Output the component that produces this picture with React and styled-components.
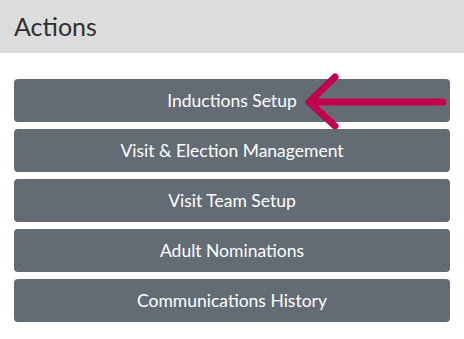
import React from 'react';
import styled, { createGlobalStyle } from 'styled-components';

const GlobalStyle = createGlobalStyle`
    html, body {
        margin: 0;
        padding: 0;
        background: #fff;
    }
    body {
        font-family: Lato, "Open Sans", sans-serif;
    }
`;

const Panel = styled.div`
    width: 464px;
    height: 339px;
    background: #fff;
`;

const Header = styled.div`
    height: 53px;
    background: #dcdcdc;
    display: flex;
    align-items: center;
    padding: 0 14px;

    h3 {
        margin: 0;
        font-size: 25px;
        font-weight: 400;
        color: #2f2f2f;
        line-height: 1;
    }
`;

const Actions = styled.div`
    display: flex;
    flex-direction: column;
    gap: 7px;
    padding: 26px 14px 0;
`;

const ActionButton = styled.button`
    position: relative;
    height: 43px;
    border: none;
    border-radius: 4px;
    background: #636b75;
    color: #fff;
    font-family: Lato, "Open Sans", sans-serif;
    font-size: 17.5px;
    font-weight: 400;
    cursor: pointer;
`;

const Pointer = styled.svg`
    position: absolute;
    left: 275px;
    top: -10px;
    overflow: visible;
`;

const items = [
    'Inductions Setup',
    'Visit & Election Management',
    'Visit Team Setup',
    'Adult Nominations',
    'Communications History',
];

const App = () => (
    <Panel>
        <GlobalStyle />
        <Header>
            <h3>Actions</h3>
        </Header>
        <Actions>
            {items.map((label, i) => (
                <ActionButton key={label}>
                    {label}
                    {i === 0 && (
                        <Pointer width="170" height="60" viewBox="0 0 170 60">
                            <path
                                d="M20 33 L154 33 M46 8 L20 33 L46 57"
                                fill="none"
                                stroke="#c2004f"
                                strokeWidth="7"
                                strokeLinecap="round"
                                strokeLinejoin="round"
                            />
                        </Pointer>
                    )}
                </ActionButton>
            ))}
        </Actions>
    </Panel>
);

export default App;
